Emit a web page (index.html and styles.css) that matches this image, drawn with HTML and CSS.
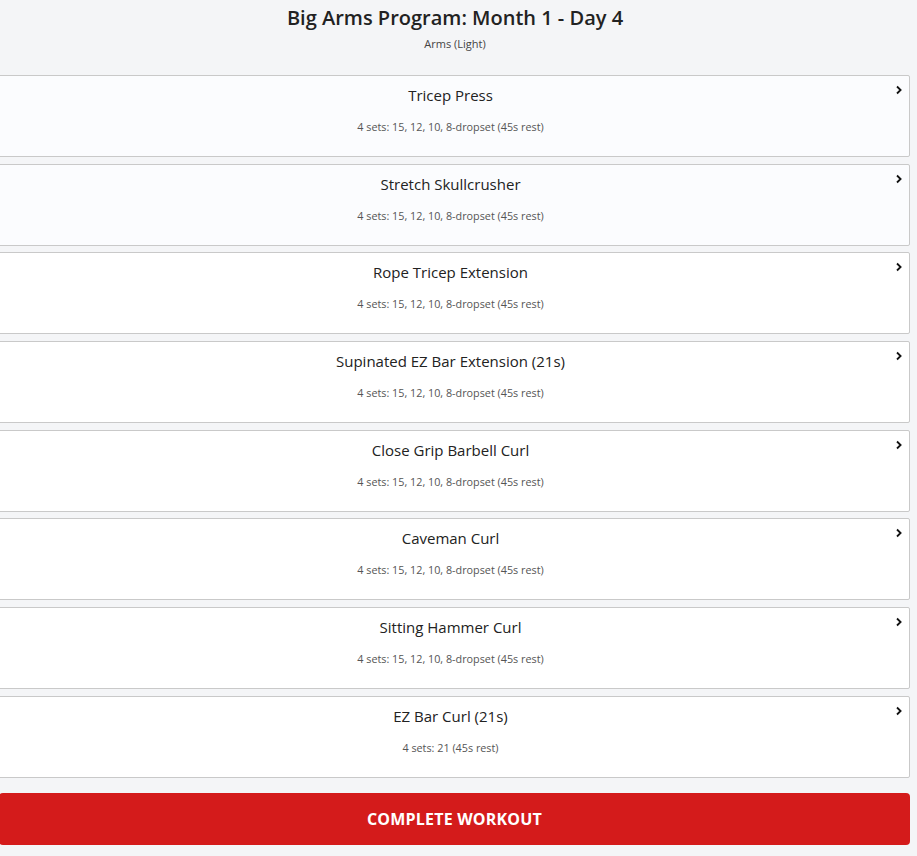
FILE: index.html
```html
<!DOCTYPE html>
<html lang="en">
<head>
<meta charset="utf-8">
<title>Big Arms Program: Month 1 - Day 4</title>
<link rel="stylesheet" href="styles.css">
</head>
<body>
<main class="page">
  <header class="header">
    <h1 class="title">Big Arms Program: Month 1 - Day 4</h1>
    <p class="subtitle">Arms (Light)</p>
  </header>
  <ul class="list">
    <li class="card card-tint">
      <div class="name">Tricep Press</div>
      <div class="sets">4 sets: 15, 12, 10, 8-dropset (45s rest)</div>
      <svg class="chev" viewBox="0 0 8 10" width="8" height="10"><path d="M2 1.5 L5.6 5 L2 8.5" fill="none" stroke="#111" stroke-width="1.8"/></svg>
    </li>
    <li class="card card-tint">
      <div class="name">Stretch Skullcrusher</div>
      <div class="sets">4 sets: 15, 12, 10, 8-dropset (45s rest)</div>
      <svg class="chev" viewBox="0 0 8 10" width="8" height="10"><path d="M2 1.5 L5.6 5 L2 8.5" fill="none" stroke="#111" stroke-width="1.8"/></svg>
    </li>
    <li class="card">
      <div class="name">Rope Tricep Extension</div>
      <div class="sets">4 sets: 15, 12, 10, 8-dropset (45s rest)</div>
      <svg class="chev" viewBox="0 0 8 10" width="8" height="10"><path d="M2 1.5 L5.6 5 L2 8.5" fill="none" stroke="#111" stroke-width="1.8"/></svg>
    </li>
    <li class="card">
      <div class="name">Supinated EZ Bar Extension (21s)</div>
      <div class="sets">4 sets: 15, 12, 10, 8-dropset (45s rest)</div>
      <svg class="chev" viewBox="0 0 8 10" width="8" height="10"><path d="M2 1.5 L5.6 5 L2 8.5" fill="none" stroke="#111" stroke-width="1.8"/></svg>
    </li>
    <li class="card">
      <div class="name">Close Grip Barbell Curl</div>
      <div class="sets">4 sets: 15, 12, 10, 8-dropset (45s rest)</div>
      <svg class="chev" viewBox="0 0 8 10" width="8" height="10"><path d="M2 1.5 L5.6 5 L2 8.5" fill="none" stroke="#111" stroke-width="1.8"/></svg>
    </li>
    <li class="card">
      <div class="name">Caveman Curl</div>
      <div class="sets">4 sets: 15, 12, 10, 8-dropset (45s rest)</div>
      <svg class="chev" viewBox="0 0 8 10" width="8" height="10"><path d="M2 1.5 L5.6 5 L2 8.5" fill="none" stroke="#111" stroke-width="1.8"/></svg>
    </li>
    <li class="card">
      <div class="name">Sitting Hammer Curl</div>
      <div class="sets">4 sets: 15, 12, 10, 8-dropset (45s rest)</div>
      <svg class="chev" viewBox="0 0 8 10" width="8" height="10"><path d="M2 1.5 L5.6 5 L2 8.5" fill="none" stroke="#111" stroke-width="1.8"/></svg>
    </li>
    <li class="card">
      <div class="name">EZ Bar Curl (21s)</div>
      <div class="sets">4 sets: 21 (45s rest)</div>
      <svg class="chev" viewBox="0 0 8 10" width="8" height="10"><path d="M2 1.5 L5.6 5 L2 8.5" fill="none" stroke="#111" stroke-width="1.8"/></svg>
    </li>
  </ul>
  <button class="complete" type="button">COMPLETE WORKOUT</button>
</main>
</body>
</html>
```

FILE: styles.css
```css
html, body {
  margin: 0;
  padding: 0;
  background: #f4f5f7;
}
body {
  font-family: "Open Sans", "DejaVu Sans", sans-serif;
  color: #222;
  overflow: hidden;
}
.page {
  width: 910px;
  display: flex;
  flex-direction: column;
}
.header {
  text-align: center;
  padding-top: 4px;
  height: 75px;
  box-sizing: border-box;
}
.title {
  margin: 0;
  font-size: 20px;
  font-weight: 600;
  line-height: 27px;
  color: #222;
}
.subtitle {
  margin: 6px 0 0;
  font-size: 11px;
  line-height: 14px;
  color: #444;
}
.list {
  list-style: none;
  margin: 0 0 0 -9px;
  padding: 0;
  width: 919px;
  display: flex;
  flex-direction: column;
  gap: 6.7px;
}
.card {
  position: relative;
  box-sizing: border-box;
  height: 82px;
  background: #fff;
  border: 1px solid #c9c9c9;
  border-radius: 2px;
  text-align: center;
  padding-top: 8px;
}
.card-tint {
  background: #fbfcfe;
}
.name {
  font-size: 15px;
  line-height: 22px;
  color: #222;
}
.sets {
  margin-top: 13px;
  font-size: 10.8px;
  line-height: 15px;
  color: #555;
}
.chev {
  position: absolute;
  top: 9px;
  right: 6px;
}
.complete {
  margin: 15px 0 0 -1px;
  width: 911px;
  height: 52px;
  border: none;
  border-radius: 4px;
  background: #d41b1b;
  color: #fff;
  font-family: "Open Sans", "DejaVu Sans", sans-serif;
  font-weight: 700;
  font-size: 16px;
  letter-spacing: 0.2px;
  cursor: pointer;
}
```
